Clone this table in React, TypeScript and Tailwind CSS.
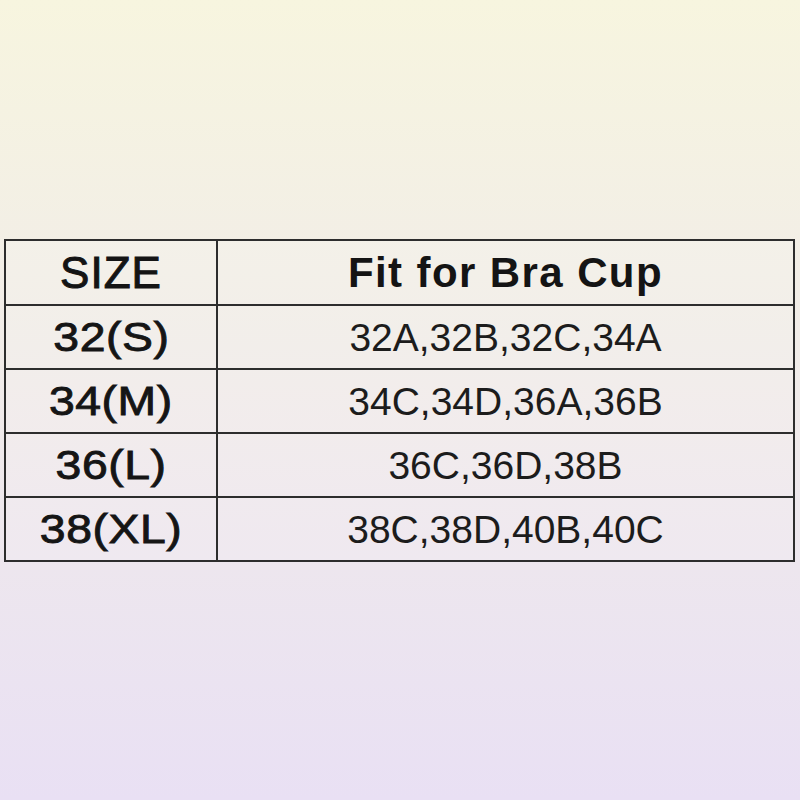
const rows: [string, string][] = [
  ['32(S)', '32A,32B,32C,34A'],
  ['34(M)', '34C,34D,36A,36B'],
  ['36(L)', '36C,36D,38B'],
  ['38(XL)', '38C,38D,40B,40C'],
];

export default function App() {
  return (
    <div className="h-[800px] w-[800px] bg-gradient-to-b from-[#f7f5df] to-[#e9e0f4] pt-[239px] pl-[4px] font-['Liberation_Sans',Arial,sans-serif] text-[#151515]">
      <table className="w-[791px] table-fixed border-collapse border-2 border-[#2d2d2d] bg-white/10">
        <colgroup>
          <col className="w-[212px]" />
          <col />
        </colgroup>
        <thead>
          <tr className="h-[65px]">
            <th className="border-2 border-[#2d2d2d] p-0 text-center text-[44px] font-normal leading-none tracking-[1px] text-[#141414] [-webkit-text-stroke:1px_#141414]">
              SIZE
            </th>
            <th className="border-2 border-[#2d2d2d] p-0 text-center text-[42px] font-bold leading-none tracking-[1.4px] text-[#141414]">
              Fit for Bra Cup
            </th>
          </tr>
        </thead>
        <tbody>
          {rows.map(([size, cups]) => (
            <tr key={size} className="h-[64px]">
              <td className="border-2 border-[#2d2d2d] p-0 text-center text-[41px] font-normal leading-none">
                <span className="inline-block scale-x-[1.13] tracking-[0.5px] [-webkit-text-stroke:0.9px_#151515]">
                  {size}
                </span>
              </td>
              <td className="border-2 border-[#2d2d2d] p-0 text-center text-[39px] leading-none text-[#1c1c1c]">
                {cups}
              </td>
            </tr>
          ))}
        </tbody>
      </table>
    </div>
  );
}
